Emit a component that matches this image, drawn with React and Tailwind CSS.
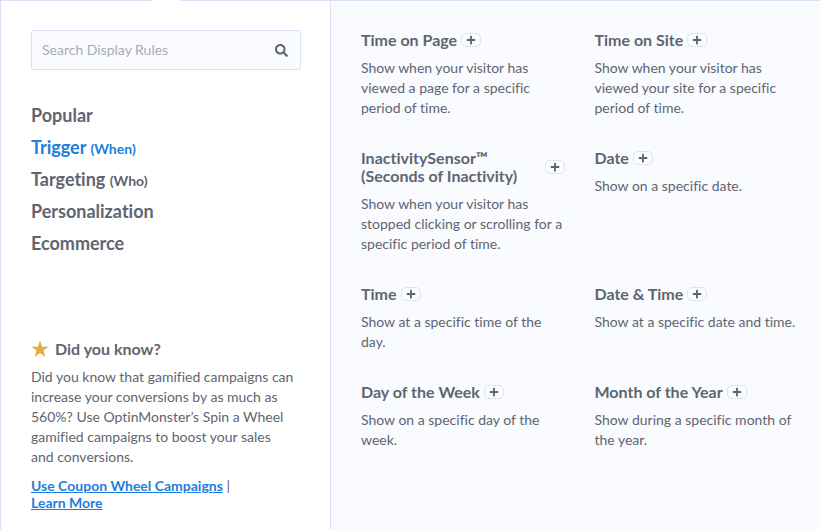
import { useState } from 'react'
import { FaPlus, FaSearch } from 'react-icons/fa'

const categories = [
  { id: 'popular', label: 'Popular' },
  { id: 'trigger', label: 'Trigger', hint: '(When)' },
  { id: 'targeting', label: 'Targeting', hint: '(Who)' },
  { id: 'personalization', label: 'Personalization' },
  { id: 'ecommerce', label: 'Ecommerce' }
]

const rules = [
  { title: 'Time on Page', text: 'Show when your visitor has viewed a page for a specific period of time.' },
  { title: 'Time on Site', text: 'Show when your visitor has viewed your site for a specific period of time.' },
  { title: 'InactivitySensor™ (Seconds of Inactivity)', text: 'Show when your visitor has stopped clicking or scrolling for a specific period of time.' },
  { title: 'Date', text: 'Show on a specific date.' },
  { title: 'Time', text: 'Show at a specific time of the day.' },
  { title: 'Date & Time', text: 'Show at a specific date and time.' },
  { title: 'Day of the Week', text: 'Show on a specific day of the week.' },
  { title: 'Month of the Year', text: 'Show during a specific month of the year.' }
]

function StarIcon() {
  return (
    <svg viewBox="0 0 18 18" className="size-[18px] fill-[#e5ac45]" aria-hidden="true">
      <path d="M9 0.5 L11.1 6.7 H17.6 L12.4 10.6 L14.4 16.9 L9 13.1 L3.6 16.9 L5.6 10.6 L0.4 6.7 H6.9 Z" />
    </svg>
  )
}

function RuleCard({ title, text }) {
  return (
    <article>
      <div className="flex items-center gap-1">
        <h3 className="text-base leading-[18px] font-bold">{title}</h3>
        <button
          type="button"
          aria-label={`Add ${title}`}
          className="flex h-3.5 w-5 shrink-0 items-center justify-center rounded-[5px] border border-[#e0e4f2] bg-[#fbfcff] hover:bg-white"
        >
          <FaPlus className="size-2.5" />
        </button>
      </div>
      <p className="mt-[9px] text-sm leading-5">{text}</p>
    </article>
  )
}

export default function App() {
  const [search, setSearch] = useState('')
  const [active, setActive] = useState('trigger')

  return (
    <div className="relative flex min-h-screen border-t border-l border-[#dbe1f5] bg-white font-['Lato',sans-serif] text-[#5f6570] [font-variant-ligatures:none]">
      {/* Opening in the top border under the selected step */}
      <span className="absolute -top-px left-[151px] h-px w-7 bg-white" />

      <aside className="w-[329px] shrink-0 pt-[29px] pr-[29px] pl-[30px]">
        <label className="flex h-10 items-center rounded-xs border border-[#dbe2f6] bg-[#f9fbff] pr-3">
          <input
            type="text"
            value={search}
            onChange={(e) => setSearch(e.target.value)}
            placeholder="Search Display Rules"
            aria-label="Search Display Rules"
            className="min-w-0 flex-1 bg-transparent px-2.5 text-sm outline-none placeholder:text-[#a7abb3]"
          />
          <FaSearch className="size-[13px]" />
        </label>

        <nav className="mt-[29px] flex flex-col items-start">
          {categories.map((item) => (
            <button
              key={item.id}
              type="button"
              onClick={() => setActive(item.id)}
              className={`h-8 text-lg font-bold ${active === item.id ? 'text-[#1a7fe0]' : ''}`}
            >
              {item.label} {item.hint && <span className="text-sm">{item.hint}</span>}
            </button>
          ))}
        </nav>

        <section className="mt-20">
          <h2 className="flex items-center gap-1.5 text-base leading-5 font-bold">
            <StarIcon />
            Did you know?
          </h2>
          <p className="mt-2 pr-1.5 text-sm leading-5">
            Did you know that gamified campaigns can increase your conversions by as much as 560%? Use
            OptinMonster’s Spin a Wheel gamified campaigns to boost your sales and conversions.
          </p>
          <p className="mt-2.5 text-sm leading-[17px]">
            <a href="#coupon" className="font-bold text-[#1a7fe0] underline">Use Coupon Wheel Campaigns</a> |
            <br />
            <a href="#learn" className="font-bold text-[#1a7fe0] underline">Learn More</a>
          </p>
        </section>
      </aside>

      <main className="grid flex-1 grid-cols-2 content-start gap-x-[30px] gap-y-[31px] border-l border-[#e0e2f5] bg-[#f9fbff] pt-[30px] pr-[22px] pb-[30px] pl-[30px]">
        {rules.map((rule) => (
          <RuleCard key={rule.title} title={rule.title} text={rule.text} />
        ))}
      </main>
    </div>
  )
}
